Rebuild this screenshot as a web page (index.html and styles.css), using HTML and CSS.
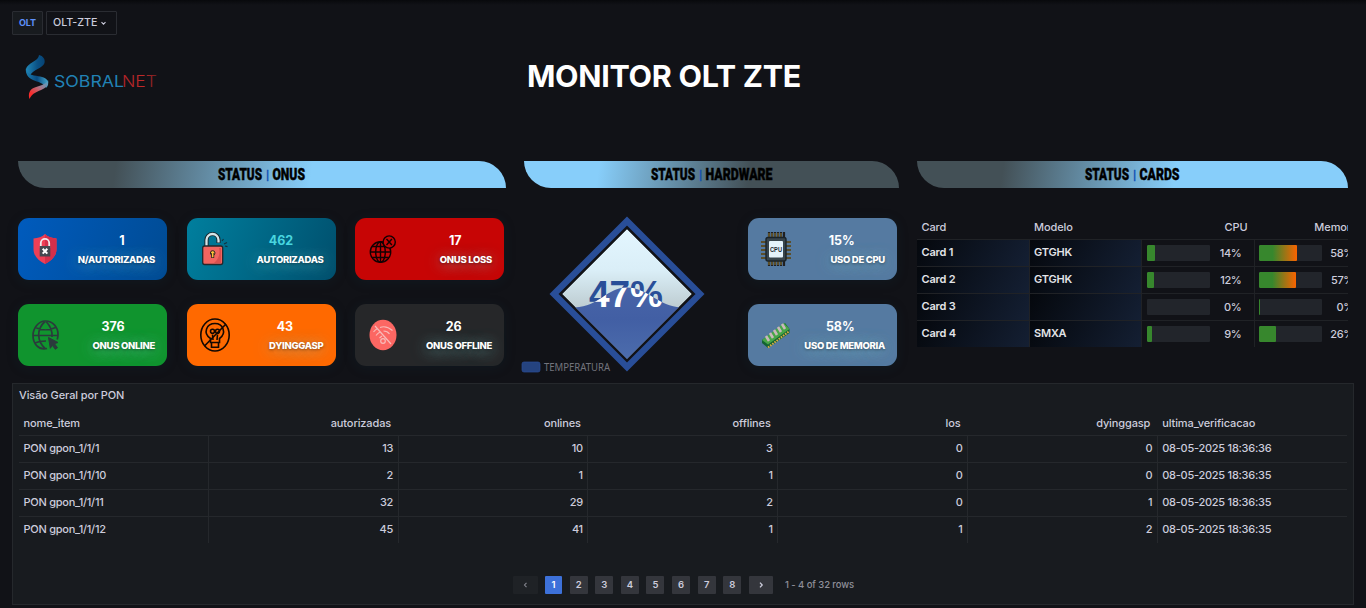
FILE: index.html
```html
<!DOCTYPE html>
<html lang="pt-BR">
<head>
<meta charset="utf-8">
<title>Monitor OLT ZTE</title>
<link rel="stylesheet" href="styles.css">
</head>
<body>
<div class="toolbar">
  <span class="var-label">OLT</span>
  <button class="var-value">OLT-ZTE
    <svg width="7" height="5" viewBox="0 0 7 5"><path d="M1.5 1.2 3.5 3.2 5.5 1.2" fill="none" stroke="#ccccdc" stroke-width="1.1"/></svg>
  </button>
</div>

<header class="hero">
  <svg class="logo" width="140" height="50" viewBox="20 52 140 50">
    <defs>
      <linearGradient id="ribTop" x1="0" x2="1"><stop offset="0" stop-color="#2187b8"/><stop offset=".6" stop-color="#0b5286"/><stop offset="1" stop-color="#064273"/></linearGradient>
      <linearGradient id="ribMid" x1="0" x2="1"><stop offset="0" stop-color="#1b7eb0"/><stop offset=".5" stop-color="#0a4b80"/><stop offset="1" stop-color="#46a9cf"/></linearGradient>
      <linearGradient id="ribEnd" x1="0" y1="1" x2="1" y2="0"><stop offset=".2" stop-color="#fa2b2b"/><stop offset=".55" stop-color="#b5707f"/><stop offset="1" stop-color="#3fa9d2"/></linearGradient>
      <linearGradient id="netInk" x1="0" x2="1"><stop offset="0" stop-color="#b02228"/><stop offset=".6" stop-color="#c02a2a"/><stop offset="1" stop-color="#701d20"/></linearGradient>
    </defs>
    <path d="M39 55c4 1 6.500 4 5.500 8-1.500 5-12 7-14 12-3-1-5-3-4.500-6 1-6 13-8 13-14z" fill="url(#ribTop)"/>
    <path d="M26 68c0 4 3 6.500 8 7.500 6 1 11 1 13.500 5 1.500 3 .5 5.500-1.500 7.500-2-5-8-6-13-8-5-2-8-7-7-12z" fill="url(#ribMid)"/>
    <path d="M48 80c1 4-1 7-5 9-5 2.500-11 4-13.500 10-1.500-5 0-9 4-11 5-2.500 13-3 14.500-8z" fill="url(#ribEnd)"/>
    <text class="logo-main" x="54" y="87" textLength="70" lengthAdjust="spacingAndGlyphs">SOBRAL</text>
    <text class="logo-net" x="122" y="86.500" textLength="35" lengthAdjust="spacingAndGlyphs" fill="url(#netInk)">NET</text>
  </svg>
  <h1>MONITOR OLT ZTE</h1>
</header>

<main class="dashboard">
  <section>
    <h2 class="banner banner-right">
      <svg width="88" height="27" viewBox="0 0 88 27"><text y="19" textLength="44" lengthAdjust="spacingAndGlyphs">STATUS</text><text class="sep" x="48" y="17.500">|</text><text x="54.500" y="19" textLength="32.500" lengthAdjust="spacingAndGlyphs">ONUS</text></svg>
    </h2>
    <div class="tiles tiles-onu">
      <article class="tile blue">
        <svg class="icon" width="34" height="40" viewBox="0 0 34 40">
          <path d="M17 5c3 3 7 4 11.500 4.500V20c0 7-5 12-11.500 15C10.500 32 5.500 27 5.500 20V9.500C10 9 14 8 17 5z" fill="#ee3f56"/><path d="M17 5c3 3 7 4 11.500 4.500V20c0 7-5 12-11.500 15z" fill="#d52f4b"/>
          <path d="M12.800 19v-5a4.200 4.200 0 0 1 8.400 0v5" fill="none" stroke="#f1e8ec" stroke-width="1.800"/><rect x="11.700" y="17" width="10.600" height="10.500" fill="#444850"/><path d="m14.700 19.800 4.600 4.800m0-4.800-4.600 4.800" stroke="#fff" stroke-width="2"/>
        </svg>
        <strong>1</strong><span>N/AUTORIZADAS</span>
      </article>
      <article class="tile teal">
        <svg class="icon" width="34" height="40" viewBox="0 0 34 40">
          <path d="M9.500 18V11a6 6 0 0 1 12 0v3" fill="none" stroke="#18262d" stroke-width="4.200"/><path d="M9.500 18V11a6 6 0 0 1 12 0v2.500" fill="none" stroke="#d6e5e8" stroke-width="2.300"/>
          <rect x="5.700" y="17" width="20" height="18.500" rx="2" fill="#f26560" stroke="#25272b" stroke-width="1.300"/><path d="M22 19q2 9-5 15h7V19z" fill="#d9504f"/>
          <circle cx="15.700" cy="24" r="2.300" fill="#ffc338" stroke="#2a2222"/><path d="M15.700 24v5" stroke="#2a2222" stroke-width="3"/><path d="M15.700 23v5.300" stroke="#ffc338" stroke-width="1.500"/>
          <path d="m25 12 1.500-2m.5 5 3-1.500M28 17l2.500.6" stroke="#16323e" stroke-width="1.200"/>
        </svg>
        <strong>462</strong><span>AUTORIZADAS</span>
      </article>
      <article class="tile red">
        <svg class="icon" width="34" height="40" viewBox="0 0 34 40" fill="none" stroke="#120203" stroke-width="1.400">
          <circle cx="15.500" cy="23" r="10.200"/><ellipse cx="15.500" cy="23" rx="4.800" ry="10.200"/><path d="M15.500 13v20M5.500 23h20M7 17.500h17M7 28.500h17"/>
          <circle cx="24.200" cy="13" r="6.100" fill="#c70505"/><path d="m21.500 10 5.400 6m0-6-5.400 6"/>
        </svg>
        <strong>17</strong><span>ONUS LOSS</span>
      </article>
      <article class="tile green">
        <svg class="icon" width="34" height="40" viewBox="0 0 34 40" fill="none" stroke="#2b3a3c" stroke-width="1.700">
          <path d="M19 33.500C10 35.500 5 28 5 20.500 5 13 10.500 6 17.500 6S30 12 30 19.500c0 2-.3 3.500-.8 5M17.500 34C8.500 26 8.500 14 17 6.500M18 6.500c5 5 6.500 10 6 15.500M7.500 12.500c6 3 14 3 20 0M5 20.500h25M7 28c3.500-1.700 7-2 11-2"/>
          <path d="m20.500 22.500 9.500 5-3.500 1.200 3 4-2.200 1.600-3-4-2 3z" fill="#2b3a3c" stroke-width="1"/>
        </svg>
        <strong>376</strong><span>ONUS ONLINE</span>
      </article>
      <article class="tile orange">
        <svg class="icon" width="34" height="40" viewBox="0 0 34 40" fill="none" stroke="#130802" stroke-width="1.600">
          <ellipse cx="18" cy="20" rx="14.200" ry="16"/><path d="M13.500 27.500v-4c-8-5.500-4-15 4.500-15 8 0 12 9.500 4.500 15v4zM14.500 27.500v4.800h7v-4.800M16 25l-.5-5.500M20 25l.5-5.500"/><circle cx="15.500" cy="16.200" r="2"/><circle cx="20.500" cy="16.200" r="2"/><path d="M7.500 31 29 9"/>
        </svg>
        <strong>43</strong><span>DYINGGASP</span>
      </article>
      <article class="tile dark">
        <svg class="icon" width="34" height="40" viewBox="0 0 34 40" fill="none" stroke="#f8bbb9" stroke-width="1.200">
          <ellipse cx="18" cy="20" rx="13.500" ry="15.200" fill="#fc6763" stroke="none"/><path d="m10 11 16 18M8.500 17q2-2.500 4-3.500M15 12.500c5-2 9 0 12.500 3M11 20.500q2-2.500 4-3.500M18.500 16q4 0 6 3M14.500 23l2.500-2"/><circle cx="18" cy="26" r="2.300"/>
        </svg>
        <strong>26</strong><span>ONUS OFFLINE</span>
      </article>
    </div>
  </section>

  <section>
    <h2 class="banner banner-left">
      <svg width="122" height="27" viewBox="0 0 122 27"><text y="19" textLength="44" lengthAdjust="spacingAndGlyphs">STATUS</text><text class="sep" x="48" y="17.500">|</text><text x="54.500" y="19" textLength="67" lengthAdjust="spacingAndGlyphs">HARDWARE</text></svg>
    </h2>
    <div class="hardware">
      <svg class="gauge" width="212" height="160" viewBox="521 215 212 160">
        <defs>
          <linearGradient id="sky" x1="0" y1="0" x2="0" y2="1"><stop offset="0" stop-color="#e3f6ff"/><stop offset=".32" stop-color="#daeef7"/><stop offset=".65" stop-color="#b9c7cb"/></linearGradient>
          <linearGradient id="water" x1="0" y1="0" x2="0" y2="1"><stop offset="0" stop-color="#4864a8"/><stop offset=".4" stop-color="#425fa4"/><stop offset="1" stop-color="#4e6fae"/></linearGradient>
          <clipPath id="diamond"><path d="m627 229 65 65-65 65-65-65z"/></clipPath>
          <clipPath id="wave"><path d="M560 307.500h15c24-1 32-20 52-20s32 19 54 20h20v60H560z"/></clipPath>
        </defs>
        <path d="m627 221 73 73-73 73-73-73z" fill="#111217" stroke="#294e98" stroke-width="6.400"/>
        <g clip-path="url(#diamond)">
          <path d="m627 229 65 65-65 65-65-65z" fill="url(#sky)"/>
          <path d="M560 307.500h15c24-1 32-20 52-20s32 19 54 20h20v60H560z" fill="url(#water)"/>
        </g>
        <text class="level" x="626" y="307" fill="#294e98">47%</text>
        <g clip-path="url(#wave)"><text class="level" x="626" y="307" fill="#fff" aria-hidden="true">47%</text></g>
        <rect x="522" y="362" width="18" height="10" rx="2" fill="#25437f" stroke="#294e98" stroke-width=".7"/>
        <text class="legend" x="544" y="371" textLength="66" lengthAdjust="spacingAndGlyphs">TEMPERATURA</text>
      </svg>
      <div class="tiles">
        <article class="tile steel">
          <svg class="icon" width="34" height="40" viewBox="0 0 34 40">
            <path d="M11 3v34M14 3v34M17 3v34M20 3v34M23 3v34M26 3v34M3 13h30M3 17h30M3 21h30M3 25h30M3 29h30" stroke="#201f20" stroke-width="2.200"/><path d="M11 4v32M14 4v32M17 4v32M20 4v32M23 4v32M3 13h30M3 17h30M3 21h30M3 25h30M3 29h30" stroke="#b59a3c" stroke-width=".8"/>
            <rect x="8" y="8.500" width="20" height="23.500" rx="2" fill="#38454c" stroke="#1a2328" stroke-width="1.400"/><rect x="11" y="12" width="14" height="16.500" rx="1" fill="#e4f3fb"/><text class="cpu-mark" x="18" y="22.500" textLength="12" lengthAdjust="spacingAndGlyphs">CPU</text>
          </svg>
          <strong>15%</strong><span>USO DE CPU</span>
        </article>
        <article class="tile steel">
          <svg class="icon" width="34" height="40" viewBox="0 0 34 40">
            <path d="m4 25 23-17 4.500 6v4L10 33l-6-5z" fill="#136332"/><path d="m4 25 22-17 5.500 6L10 29.500z" fill="#47a647"/><path d="m10 32.500 21.500-16.500" stroke="#d9aa45" stroke-width="2" stroke-dasharray="1.600 1.100"/>
            <path d="m8 21 3 5M12 18l3 5M16 15l3 5M20 12l3 5M24 9l3 5" stroke="#c9b8ba" stroke-width="2.600"/>
          </svg>
          <strong>58%</strong><span>USO DE MEMORIA</span>
        </article>
      </div>
    </div>
  </section>

  <section>
    <h2 class="banner banner-right">
      <svg width="95" height="27" viewBox="0 0 95 27"><text y="19" textLength="44" lengthAdjust="spacingAndGlyphs">STATUS</text><text class="sep" x="48" y="17.500">|</text><text x="54.500" y="19" textLength="40" lengthAdjust="spacingAndGlyphs">CARDS</text></svg>
    </h2>
    <div class="cards">
      <div class="crow chead"><div>Card</div><div>Modelo</div><div class="num">CPU</div><div class="num">Memoria</div></div>
      <div class="crow"><div class="name">Card 1</div><div class="name">GTGHK</div><div class="meter"><i><b style="width:14%"></b></i><em>14%</em></div><div class="meter"><i><b class="warm" style="width:61%"></b></i><em>58%</em></div></div>
      <div class="crow"><div class="name">Card 2</div><div class="name">GTGHK</div><div class="meter"><i><b style="width:12.5%"></b></i><em>12%</em></div><div class="meter"><i><b class="warm" style="width:59%"></b></i><em>57%</em></div></div>
      <div class="crow"><div class="name">Card 3</div><div class="name"></div><div class="meter"><i></i><em>0%</em></div><div class="meter"><i><b style="width:1px"></b></i><em>0%</em></div></div>
      <div class="crow"><div class="name">Card 4</div><div class="name">SMXA</div><div class="meter"><i><b style="width:9.500%"></b></i><em>9%</em></div><div class="meter"><i><b style="width:27%"></b></i><em>26%</em></div></div>
    </div>
  </section>
</main>

<section class="panel">
  <h3>Visão Geral por PON</h3>
  <div class="grid">
    <div class="prow phead"><div>nome_item</div><div>autorizadas</div><div>onlines</div><div>offlines</div><div>los</div><div>dyinggasp</div><div>ultima_verificacao</div></div>
    <div class="prow"><div>PON gpon_1/1/1</div><div>13</div><div>10</div><div>3</div><div>0</div><div>0</div><div>08-05-2025 18:36:36</div></div>
    <div class="prow"><div>PON gpon_1/1/10</div><div>2</div><div>1</div><div>1</div><div>0</div><div>0</div><div>08-05-2025 18:36:35</div></div>
    <div class="prow"><div>PON gpon_1/1/11</div><div>32</div><div>29</div><div>2</div><div>0</div><div>1</div><div>08-05-2025 18:36:35</div></div>
    <div class="prow"><div>PON gpon_1/1/12</div><div>45</div><div>41</div><div>1</div><div>1</div><div>2</div><div>08-05-2025 18:36:35</div></div>
  </div>
  <nav class="pager">
    <button class="step off"><svg width="6" height="8" viewBox="0 0 6 8"><path d="M4.500 1.800 2.500 4l2 2.200" fill="none" stroke="#85868f" stroke-width="1.100"/></svg></button>
    <button class="current">1</button><button>2</button><button>3</button><button>4</button><button>5</button><button>6</button><button>7</button><button>8</button>
    <button class="step"><svg width="6" height="8" viewBox="0 0 6 8"><path d="M2 1.600 4.200 4 2 6.400" fill="none" stroke="#ccccdc" stroke-width="1.300"/></svg></button>
    <span>1 - 4 of 32 rows</span>
  </nav>
</section>
</body>
</html>
```
FILE: styles.css
```css
* { box-sizing: border-box; }
body {
  margin: 0;
  height: 608px;
  overflow: hidden;
  background: linear-gradient(#08090c, #111217 5px);
  color: #ccccdc;
  font: 500 11px/16px Inter, "Liberation Sans", sans-serif;
}
h1, h2, h3 { margin: 0; }
svg { display: block; flex: none; }
button { font: inherit; border: 0; padding: 0; color: inherit; }

.toolbar { display: flex; gap: 3px; padding: 11px 0 0 12px; }
.var-label, .var-value {
  display: flex; align-items: center; height: 24px;
  border: 1px solid #2a2c32; border-radius: 1px;
}
.var-label { width: 31px; justify-content: center; background: #181b1f; color: #5f91fb; font-size: 9px; font-weight: 700; }
.var-value { width: 71px; padding-left: 6px; gap: 3px; background: #111217; font-size: 10.700px; font-weight: 500; letter-spacing: -.05px; white-space: nowrap; }

.hero { display: grid; grid-template-columns: 507px 1fr; height: 126px; padding: 17px 0 0 20px; }
.hero h1 { height: 48px; color: #fff; font-size: 30.500px; line-height: 48px; font-weight: 700; white-space: nowrap; letter-spacing: -.3px; }
.logo-main { font: 400 16.500px Inter, sans-serif; fill: #2182b5; }
.logo-net { font: 300 15.500px Inter, sans-serif; }

.dashboard { display: grid; grid-template-columns: 488px 375px 431px; gap: 18px; height: 222px; margin-left: 18px; }
.banner { display: flex; justify-content: center; height: 27px; border-radius: 0 27px 0 27px; font: 900 16.800px Roboto, "Liberation Sans", sans-serif; }
.banner svg { overflow: visible; }
.banner text { stroke: #000; stroke-width: .45px; }
.banner-right { background: linear-gradient(98deg, #435056 0 20%, #87cefa 60%); }
.banner-left { background: linear-gradient(98deg, #87cefa 0 20%, #435056 60%); }
.banner .sep { fill: #1450b4; stroke: #1450b4; font-weight: 400; font-size: 13px; }

.tiles { display: grid; row-gap: 24px; grid-auto-rows: 62px; }
.tiles-onu { grid-template-columns: repeat(3, 149px); column-gap: 19.500px; margin-top: 30px; }
.tile {
  display: grid; grid-template: 17px 18px / 36px 1fr; padding: 14px 12px 0 10px;
  row-gap: 2px; border-radius: 11px; color: #fff; text-align: right; white-space: nowrap;
  box-shadow: 0 2px 12px rgba(20, 50, 65, .22);
}
.tile .icon { grid-row: 1 / 3; margin-top: -3px; }
.tile strong { padding-right: 30.500px; font-size: 12.500px; line-height: 18px; font-weight: 700; letter-spacing: -.1px; }
.tile span { font-size: 9.500px; line-height: 18px; font-weight: 800; letter-spacing: -.29px; text-shadow: 0 1px 3px rgba(0,0,0,.4), 0 2px 15px rgba(130,210,210,.8); }
.blue { background: linear-gradient(110deg, #005bbd, #004b93); }
.teal { background: linear-gradient(110deg, #007f9e, #004f6d); }
.teal strong { color: #49d5df; }
.red { background: #c70505; }
.green { background: #10942e; }
.orange { background: #ff6900; }
.dark { background: #262729; }
.steel { background: #557aa1; }

.hardware { display: flex; justify-content: space-between; padding-right: 2px; }
.hardware .tiles { grid-template-columns: 149px; margin-top: 30px; }
.gauge { margin: 27px 0 0 -3px; }
.level { font: 700 37px "Liberation Sans", sans-serif; text-anchor: middle; }
.legend { font: 400 10px "Noto Sans", sans-serif; fill: #73747d; }
.cpu-mark { font: 700 7px "Liberation Sans", sans-serif; text-anchor: middle; fill: #1c2a32; }

.cards { width: 431px; overflow: hidden; margin-top: 27px; }
.crow { display: grid; grid-template-columns: repeat(4, 112.500px); width: 450px; height: 27px; border-top: 1px solid #202226; }
.crow > div { padding: 4px 4.500px 0; line-height: 17px; border-right: 1px solid #202226; letter-spacing: -.1px; }
.crow.chead { height: 24px; border-top: 0; }
.chead > div { padding-top: 4px; border-right: 0; }
.chead .num { text-align: right; padding-right: 7px; }
.crow .name { background: linear-gradient(120deg, #05080d, #141f33); color: #e3e4e8; font-weight: 600; letter-spacing: -.2px; }
.crow .meter { display: flex; justify-content: space-between; padding: 5px 12px 0 4.500px; }
.meter i { display: block; width: 63px; height: 16px; border-radius: 1px; background: #22252b; overflow: hidden; }
.meter b { display: block; height: 100%; border-radius: 1px; background: #37872d; }
.meter .warm { background: linear-gradient(90deg, #37872d 36%, #fa6400); }
.meter em { font-style: normal; line-height: 16px; letter-spacing: -.3px; }

.panel { width: 1342px; height: 222px; margin-left: 12px; padding: 0 6px; border: 1px solid #25282c; background: #181b1f; }
.panel h3 { height: 27px; font-size: 11px; line-height: 22px; font-weight: 500; letter-spacing: -.12px; }
.prow { display: grid; grid-template-columns: repeat(7, 189.800px); height: 27px; border-top: 1px solid #25282c; letter-spacing: -.26px; }
.prow.phead { height: 24px; border: 0; letter-spacing: -.12px; }
.prow > div { padding: 4px 4.500px 0 4.500px; line-height: 17px; text-align: right; border-right: 1px solid #25282c; }
.prow > div:first-child, .prow > div:last-child { text-align: left; }
.prow > div:last-child { border: 0; }
.prow.phead > div { padding-right: 7.500px; border: 0; }
.pager { display: flex; align-items: center; gap: 7.600px; height: 18px; margin: 33px 0 0 494px; font-size: 9.500px; }
.pager button { display: flex; align-items: center; justify-content: center; width: 18px; height: 18px; border-radius: 1px; background: #34363c; font-weight: 600; }
.pager .current { width: 17px; background: #3d71d9; color: #fff; }
.pager .step { width: 24.500px; }
.pager .off { background: #1f2226; }
.pager span { margin-left: 4px; color: #8e8f99; font-size: 9.500px; letter-spacing: -.08px; white-space: nowrap; }
```
